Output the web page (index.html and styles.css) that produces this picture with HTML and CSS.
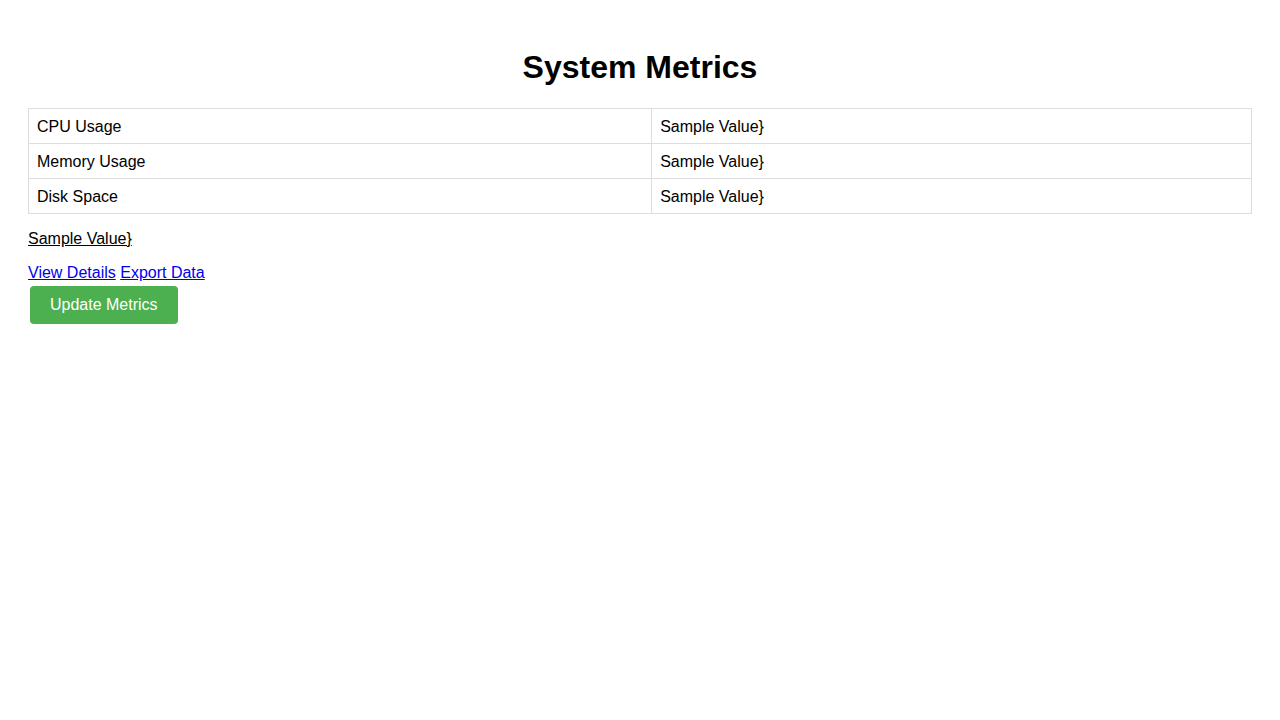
FILE: index.html
```html
<!DOCTYPE html>
<html>
<head>
<meta charset="utf-8">
<title>System Metrics</title>
<link rel="stylesheet" href="styles.css">
</head>
<body>
<div class="container">
  <h1 class="title">System Metrics</h1>
  <table class="metrics">
    <tr><td>CPU Usage</td><td>Sample Value}</td></tr>
    <tr><td>Memory Usage</td><td>Sample Value}</td></tr>
    <tr><td>Disk Space</td><td>Sample Value}</td></tr>
  </table>
  <p class="note"><a class="plain-link" href="#">Sample Value}</a></p>
  <div class="links"><a href="#">View Details</a> <a href="#">Export Data</a></div>
  <button class="btn">Update Metrics</button>
</div>
</body>
</html>
```
FILE: styles.css
```css
body {
  margin: 8px;
  font-family: "Liberation Sans", Arial, sans-serif;
  font-size: 16px;
  color: #000;
  background: #fff;
}
.container {
  padding: 20px;
}
.title {
  text-align: center;
  font-size: 32px;
  font-weight: bold;
  margin: 21.44px 0;
}
.metrics {
  width: 100%;
  border-collapse: collapse;
}
.metrics td {
  border: 1px solid #ddd;
  padding: 9px 8px 7px;
  text-align: left;
}
.note {
  margin: 16px 0;
}
.plain-link {
  color: #000;
  text-decoration: underline;
}
.links a {
  color: #0000ee;
}
.btn {
  display: inline-block;
  margin: 4px 2px;
  padding: 10px 20px;
  background: #4caf50;
  color: #fff;
  border: none;
  border-radius: 4px;
  font-family: "Liberation Sans", Arial, sans-serif;
  font-size: 16px;
  line-height: 18px;
  cursor: pointer;
}
```
